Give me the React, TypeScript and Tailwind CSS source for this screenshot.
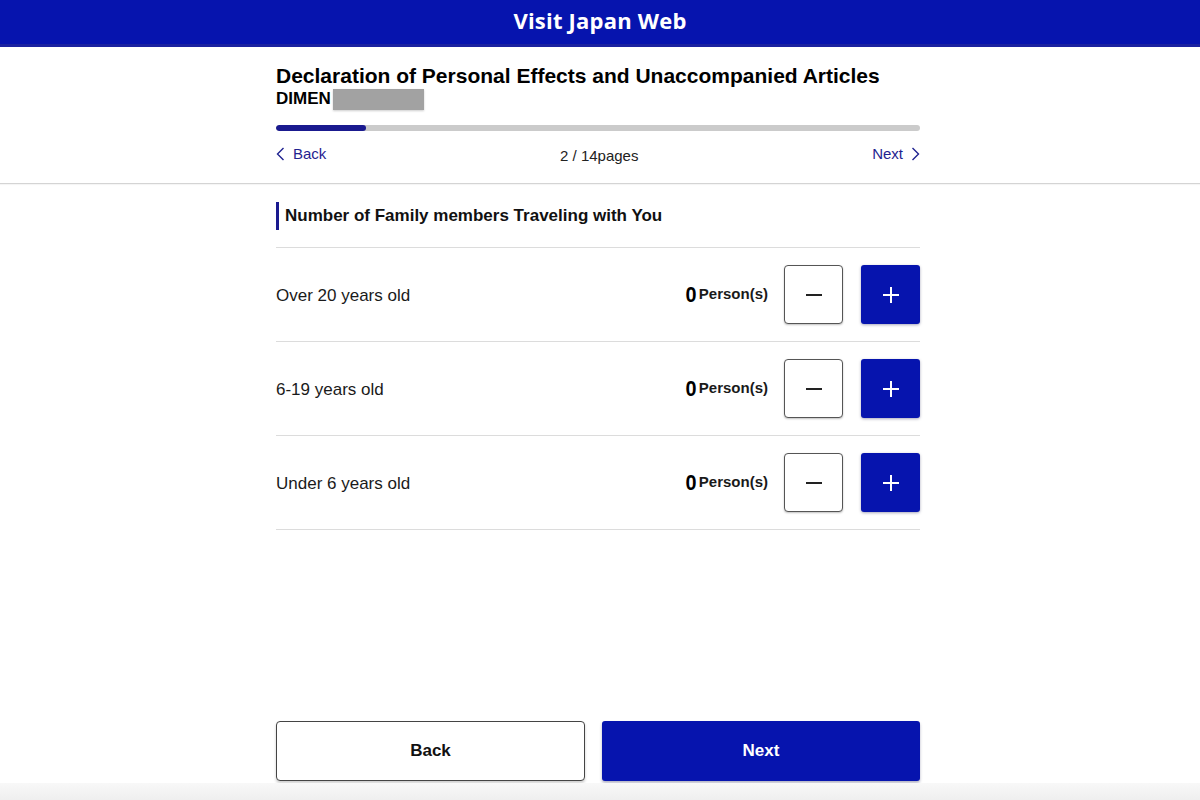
import React, { useState } from 'react';

const BLUE = 'bg-[#0614ae]';

interface Row {
  id: string;
  label: string;
}

const rows: Row[] = [
  { id: 'over20', label: 'Over 20 years old' },
  { id: 'age6to19', label: '6-19 years old' },
  { id: 'under6', label: 'Under 6 years old' },
];

const Chevron: React.FC<{ dir: 'left' | 'right' }> = ({ dir }) => (
  <svg width="9" height="14" viewBox="0 0 9 14" fill="none" stroke="currentColor" strokeWidth="1.4">
    {dir === 'left' ? <path d="M7.5 1 L1.5 7 L7.5 13" /> : <path d="M1.5 1 L7.5 7 L1.5 13" />}
  </svg>
);

const CounterRow: React.FC<{ label: string; value: number; onChange: (v: number) => void }> = ({
  label,
  value,
  onChange,
}) => (
  <div className="flex items-center h-[94px] border-b border-[#dcdcdc]">
    <span className="text-[17px] text-[#1a1a1a] mt-[2px]">{label}</span>
    <div className="ml-auto flex items-center">
      <span className="text-[22px] font-bold text-black leading-none mr-[2px] scale-x-90">{value}</span>
      <span className="text-[15px] font-bold text-[#1a1a1a]">Person(s)</span>
      <button
        onClick={() => onChange(Math.max(0, value - 1))}
        className="ml-[16px] w-[59px] h-[59px] rounded-[4px] border border-[#555] bg-white flex items-center justify-center shadow-[0_1px_2px_rgba(0,0,0,0.25)]"
      >
        <span className="block w-[16px] h-[2px] bg-[#222]" />
      </button>
      <button
        onClick={() => onChange(value + 1)}
        className={`ml-[18px] w-[59px] h-[59px] rounded-[3px] ${BLUE} flex items-center justify-center shadow-[0_1px_3px_rgba(0,0,60,0.35)]`}
      >
        <svg width="18" height="18" viewBox="0 0 18 18" stroke="white" strokeWidth="2">
          <path d="M9 1 V17 M1 9 H17" />
        </svg>
      </button>
    </div>
  </div>
);

export default function App() {
  const [counts, setCounts] = useState<Record<string, number>>({ over20: 0, age6to19: 0, under6: 0 });

  return (
    <div className="w-[1200px] h-[800px] bg-white flex flex-col font-['Liberation_Sans',Arial,sans-serif] overflow-hidden">
      {/* Header */}
      <header className={`h-[47px] ${BLUE} flex items-center justify-center border-b-[3px] border-[#1b22a0] shrink-0`}>
        <span className="text-white text-[22px] font-bold tracking-[0.2px] font-['Open_Sans',sans-serif] -mt-[4px]">
          Visit Japan Web
        </span>
      </header>

      {/* Title block */}
      <div className="border-b border-[#d4d4d4] shadow-[0_1px_1px_rgba(0,0,0,0.04)]">
        <div className="w-[644px] ml-[276px] pt-[16px]">
          <h1 className="text-[21px] font-bold text-black leading-[25px]">
            Declaration of Personal Effects and Unaccompanied Articles
          </h1>
          <div className="flex items-center h-[22px]">
            <span className="text-[17px] font-bold text-black">DIMEN</span>
            <span className="ml-[2px] w-[91px] h-[21px] bg-[#a2a2a2] shadow-[0_1px_2px_rgba(0,0,0,0.2)]" />
          </div>

          <div className="mt-[15px] h-[6px] rounded-full bg-[#cbcbcb] overflow-hidden">
            <div className="h-full w-[90px] rounded-full bg-[#1a1a8f]" />
          </div>

          <div className="flex items-center justify-between h-[32px] mt-[7px] mb-[13px]">
            <button className="flex items-center gap-[8px] text-[15px] text-[#1f2390]">
              <Chevron dir="left" />
              <span>Back</span>
            </button>
            <span className="text-[15px] text-[#222] mt-[4px]">2 / 14pages</span>
            <button className="flex items-center gap-[8px] text-[15px] text-[#1f2390]">
              <span>Next</span>
              <Chevron dir="right" />
            </button>
          </div>
        </div>
      </div>

      {/* Content */}
      <div className="w-[644px] ml-[276px] flex-1 flex flex-col">
        <div className="mt-[18px] flex items-center h-[28px] border-l-[3px] border-[#1a1a8f] pl-[6px]">
          <h2 className="text-[17px] font-bold text-[#111]">Number of Family members Traveling with You</h2>
        </div>

        <div className="mt-[17px] border-t border-[#dcdcdc]">
          {rows.map((r) => (
            <CounterRow
              key={r.id}
              label={r.label}
              value={counts[r.id]}
              onChange={(v) => setCounts((c) => ({ ...c, [r.id]: v }))}
            />
          ))}
        </div>

        <div className="mt-auto mb-[2px] flex gap-[17px]">
          <button className="w-[309px] h-[60px] rounded-[4px] border border-[#444] bg-white text-[17px] font-bold text-[#111] shadow-[0_2px_3px_rgba(0,0,0,0.2)]">
            Back
          </button>
          <button className={`flex-1 h-[60px] rounded-[3px] ${BLUE} text-[17px] font-bold text-white shadow-[0_2px_3px_rgba(0,0,60,0.3)]`}>
            Next
          </button>
        </div>
      </div>

      <div className="h-[17px] shrink-0 bg-gradient-to-b from-[#f8f8f8] to-[#efefef]" />
    </div>
  );
}
